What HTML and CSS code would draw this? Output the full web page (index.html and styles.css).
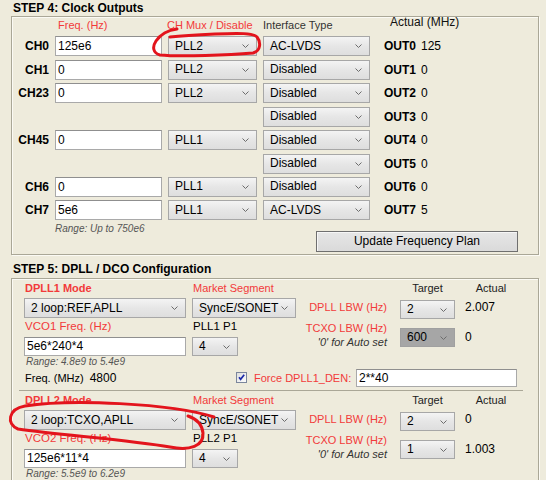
FILE: index.html
```html
<!DOCTYPE html>
<html>
<head>
<meta charset="utf-8">
<link rel="stylesheet" href="styles.css">
</head>
<body>
<div class="page">
  <div class="step-title">STEP 4: Clock Outputs</div>
  <div class="group g4">
    <div class="clk-grid">
      <div></div>
      <div class="hdr red pad-freq">Freq. (Hz)</div>
      <div class="hdr red pad-mux">CH Mux / Disable</div>
      <div class="hdr dark">Interface Type</div>
      <div class="hdr-actual">Actual (MHz)</div>

      <div class="ch">CH0</div>
      <div class="inp">125e6</div>
      <div class="sel"><span>PLL2</span><svg class="chev" width="7" height="4" viewBox="0 0 7 4"><path d="M0.5 0.5L3.5 3.5L6.5 0.5"/></svg></div>
      <div class="sel"><span>AC-LVDS</span><svg class="chev" width="7" height="4" viewBox="0 0 7 4"><path d="M0.5 0.5L3.5 3.5L6.5 0.5"/></svg></div>
      <div class="out"><b>OUT0</b>125</div>

      <div class="ch">CH1</div>
      <div class="inp">0</div>
      <div class="sel"><span>PLL2</span><svg class="chev" width="7" height="4" viewBox="0 0 7 4"><path d="M0.5 0.5L3.5 3.5L6.5 0.5"/></svg></div>
      <div class="sel"><span>Disabled</span><svg class="chev" width="7" height="4" viewBox="0 0 7 4"><path d="M0.5 0.5L3.5 3.5L6.5 0.5"/></svg></div>
      <div class="out"><b>OUT1</b>0</div>

      <div class="ch">CH23</div>
      <div class="inp">0</div>
      <div class="sel"><span>PLL2</span><svg class="chev" width="7" height="4" viewBox="0 0 7 4"><path d="M0.5 0.5L3.5 3.5L6.5 0.5"/></svg></div>
      <div class="sel"><span>Disabled</span><svg class="chev" width="7" height="4" viewBox="0 0 7 4"><path d="M0.5 0.5L3.5 3.5L6.5 0.5"/></svg></div>
      <div class="out"><b>OUT2</b>0</div>

      <div></div>
      <div></div>
      <div></div>
      <div class="sel"><span>Disabled</span><svg class="chev" width="7" height="4" viewBox="0 0 7 4"><path d="M0.5 0.5L3.5 3.5L6.5 0.5"/></svg></div>
      <div class="out"><b>OUT3</b>0</div>

      <div class="ch">CH45</div>
      <div class="inp">0</div>
      <div class="sel"><span>PLL1</span><svg class="chev" width="7" height="4" viewBox="0 0 7 4"><path d="M0.5 0.5L3.5 3.5L6.5 0.5"/></svg></div>
      <div class="sel"><span>Disabled</span><svg class="chev" width="7" height="4" viewBox="0 0 7 4"><path d="M0.5 0.5L3.5 3.5L6.5 0.5"/></svg></div>
      <div class="out"><b>OUT4</b>0</div>

      <div></div>
      <div></div>
      <div></div>
      <div class="sel"><span>Disabled</span><svg class="chev" width="7" height="4" viewBox="0 0 7 4"><path d="M0.5 0.5L3.5 3.5L6.5 0.5"/></svg></div>
      <div class="out"><b>OUT5</b>0</div>

      <div class="ch">CH6</div>
      <div class="inp">0</div>
      <div class="sel"><span>PLL1</span><svg class="chev" width="7" height="4" viewBox="0 0 7 4"><path d="M0.5 0.5L3.5 3.5L6.5 0.5"/></svg></div>
      <div class="sel"><span>Disabled</span><svg class="chev" width="7" height="4" viewBox="0 0 7 4"><path d="M0.5 0.5L3.5 3.5L6.5 0.5"/></svg></div>
      <div class="out"><b>OUT6</b>0</div>

      <div class="ch">CH7</div>
      <div class="inp">5e6</div>
      <div class="sel"><span>PLL1</span><svg class="chev" width="7" height="4" viewBox="0 0 7 4"><path d="M0.5 0.5L3.5 3.5L6.5 0.5"/></svg></div>
      <div class="sel"><span>AC-LVDS</span><svg class="chev" width="7" height="4" viewBox="0 0 7 4"><path d="M0.5 0.5L3.5 3.5L6.5 0.5"/></svg></div>
      <div class="out"><b>OUT7</b>5</div>
    </div>
    <div class="clk-foot">
      <div class="range range4">Range: Up to 750e6</div>
      <div class="btn">Update Frequency Plan</div>
    </div>
  </div>

  <div class="step-title step5">STEP 5: DPLL / DCO Configuration</div>
  <div class="group g5">
    <div class="dpll d1">
      <div class="dpll-main">
        <div class="dl-grid">
          <div class="lbl red bold">DPLL1 Mode</div>
          <div class="lbl red">Market Segment</div>
          <div class="sel"><span>2 loop:REF,APLL</span><svg class="chev" width="7" height="4" viewBox="0 0 7 4"><path d="M0.5 0.5L3.5 3.5L6.5 0.5"/></svg></div>
          <div class="sel"><span>SyncE/SONET</span><svg class="chev" width="7" height="4" viewBox="0 0 7 4"><path d="M0.5 0.5L3.5 3.5L6.5 0.5"/></svg></div>
          <div class="lbl2 red">VCO1 Freq. (Hz)</div>
          <div class="lbl2">PLL1 P1</div>
          <div class="inp inp-vco">5e6*240*4</div>
          <div class="sel sel-p1"><span>4</span><svg class="chev" width="7" height="4" viewBox="0 0 7 4"><path d="M0.5 0.5L3.5 3.5L6.5 0.5"/></svg></div>
          <div class="range range5">Range: 4.8e9 to 5.4e9</div>
          <div></div>
        </div>
        <div class="dr-grid">
          <div></div>
          <div class="rh target">Target</div>
          <div class="rh">Actual</div>
          <div class="rlbl red">DPLL LBW (Hz)</div>
          <div class="sel sel-lbw"><span>2</span><svg class="chev" width="7" height="4" viewBox="0 0 7 4"><path d="M0.5 0.5L3.5 3.5L6.5 0.5"/></svg></div>
          <div class="ract">2.007</div>
          <div class="rlbl2"><div class="red">TCXO LBW (Hz)</div><div class="note">'0' for Auto set</div></div>
          <div class="sel sel-lbw2 disabled"><span>600</span><svg class="chev" width="7" height="4" viewBox="0 0 7 4"><path d="M0.5 0.5L3.5 3.5L6.5 0.5"/></svg></div>
          <div class="ract2">0</div>
        </div>
      </div>
      <div class="dpll-foot">
        <div class="freq-info">Freq. (MHz)<span class="fval">4800</span></div>
        <svg class="cbox" width="11" height="11" viewBox="0 0 11 11">
          <defs><linearGradient id="cbg" x1="0" y1="0" x2="1" y2="1"><stop offset="0" stop-color="#dcdcdc"/><stop offset="1" stop-color="#ffffff"/></linearGradient></defs>
          <rect x="0.5" y="0.5" width="10" height="10" fill="url(#cbg)" stroke="#7b869c"/>
          <path d="M3 5.3L4.6 7.3L8.2 2.8" fill="none" stroke="#1c2aa8" stroke-width="1.7"/>
        </svg>
        <div class="force red">Force DPLL1_DEN:</div>
        <div class="inp inp-den">2**40</div>
      </div>
    </div>

    <div class="dpll d2">
      <div class="dpll-main">
        <div class="dl-grid">
          <div class="lbl red bold">DPLL2 Mode</div>
          <div class="lbl red">Market Segment</div>
          <div class="sel"><span>2 loop:TCXO,APLL</span><svg class="chev" width="7" height="4" viewBox="0 0 7 4"><path d="M0.5 0.5L3.5 3.5L6.5 0.5"/></svg></div>
          <div class="sel"><span>SyncE/SONET</span><svg class="chev" width="7" height="4" viewBox="0 0 7 4"><path d="M0.5 0.5L3.5 3.5L6.5 0.5"/></svg></div>
          <div class="lbl2 red">VCO2 Freq. (Hz)</div>
          <div class="lbl2">PLL2 P1</div>
          <div class="inp inp-vco">125e6*11*4</div>
          <div class="sel sel-p1"><span>4</span><svg class="chev" width="7" height="4" viewBox="0 0 7 4"><path d="M0.5 0.5L3.5 3.5L6.5 0.5"/></svg></div>
          <div class="range range5">Range: 5.5e9 to 6.2e9</div>
          <div></div>
        </div>
        <div class="dr-grid">
          <div></div>
          <div class="rh target">Target</div>
          <div class="rh">Actual</div>
          <div class="rlbl red">DPLL LBW (Hz)</div>
          <div class="sel sel-lbw"><span>2</span><svg class="chev" width="7" height="4" viewBox="0 0 7 4"><path d="M0.5 0.5L3.5 3.5L6.5 0.5"/></svg></div>
          <div class="ract">0</div>
          <div class="rlbl2"><div class="red">TCXO LBW (Hz)</div><div class="note">'0' for Auto set</div></div>
          <div class="sel sel-lbw2"><span>1</span><svg class="chev" width="7" height="4" viewBox="0 0 7 4"><path d="M0.5 0.5L3.5 3.5L6.5 0.5"/></svg></div>
          <div class="ract2">1.003</div>
        </div>
      </div>
    </div>
  </div>

  <svg class="annot" width="546" height="480" viewBox="0 0 546 480">
    <path d="M177,29 C168,30 160,35 156,41 C152,47 153,53 160,55 C180,57 230,55 253,53 C261,51 261,42 257,37 C253,33 240,33 215,34 C195,35 180,36 170,37"/>
    <path d="M214,417 C170,403 70,399 25,406 C8,409 6,424 18,429 C60,435 130,440 170,447 C190,451 204,446 203,433 C202,424 197,419 188,416"/>
  </svg>
</div>
</body>
</html>
```

FILE: styles.css
```css
* { box-sizing: border-box; }
body {
  margin: 0;
  font-family: "Liberation Sans", Arial, sans-serif;
  color: #000;
  background: #eeebdc;
}
.page {
  position: relative;
  width: 546px;
  height: 480px;
  overflow: hidden;
  background: #eeebdc;
}
.step-title {
  font-weight: bold;
  font-size: 12px;
  line-height: 16px;
  height: 16px;
  padding-left: 13px;
}
.step5 { margin-top: 6px; margin-bottom: 1px; }
.group {
  margin-left: 11px;
  width: 528px;
  border: 1px solid #aaa797;
  box-shadow: inset 1px 1px 0 #fbfaf4, 1px 1px 0 #fbfaf4;
}
.g4 { height: 239px; }
.g5 { height: 230px; }
.red { color: #f23a3a; }
.bold { font-weight: bold; }

/* STEP 4 grid */
.clk-grid {
  display: grid;
  grid-template-columns: 37px 107px 89px 107px 1fr;
  grid-template-rows: 16px repeat(8, 20px);
  column-gap: 6px;
  row-gap: 3.43px;
}
.hdr { font-size: 11px; line-height: 16px; white-space: nowrap; }
.hdr.dark { color: #333; }
.pad-freq { padding-left: 3px; }
.pad-mux { margin-left: -1px; }
.hdr-actual { font-size: 12px; line-height: 16px; padding-left: 14px; margin-top: -3px; color: #111; }
.ch { font-weight: bold; font-size: 12px; line-height: 20px; text-align: right; }
.inp {
  height: 20px;
  background: #fff;
  border: 1px solid #a9a9a9;
  border-top-color: #8f8f8f;
  font-size: 12px;
  line-height: 16px;
  padding: 1px 2px;
  white-space: nowrap;
}
.sel {
  height: 20px;
  display: flex;
  align-items: center;
  border: 1px solid #a7a7a7;
  background: linear-gradient(#f4f4f4, #e6e6e6 50%, #dedede);
  font-size: 12px;
  padding: 0 7px 1px 6px;
  white-space: nowrap;
}
.sel span { flex: 1; }
.sel.disabled { background: #a6a6a6; border-color: #a0a0a0; }
.chev { flex: none; margin-top: 1px; }
.chev path { fill: none; stroke: #6c6c6c; stroke-width: 1; }
.out { font-size: 12px; line-height: 20px; padding-left: 8px; white-space: nowrap; }
.out b { display: inline-block; width: 37px; font-size: 12px; }

.clk-foot { display: flex; align-items: flex-start; }
.range { font-size: 10px; font-style: italic; color: #555; line-height: 12px; white-space: nowrap; }
.range4 { margin-left: 43px; margin-top: 3px; }
.btn {
  margin-left: auto;
  margin-right: 20px;
  margin-top: 11px;
  width: 202px;
  height: 21px;
  border: 1px solid #6f6f6f;
  background: linear-gradient(#e6e6e6, #dadada);
  box-shadow: inset 1px 1px 0 #f6f6f6;
  font-size: 12px;
  line-height: 19px;
  text-align: center;
}

/* STEP 5 */
.dpll { margin: 0 15px 0 7px; padding-left: 5px; }
.d1 { border-bottom: 1px solid #aaa797; }
.dpll-main { display: flex; align-items: flex-start; }
.dl-grid {
  display: grid;
  grid-template-columns: 162px 104px;
  grid-template-rows: 19px 20px 19px 19px 11px;
  column-gap: 6px;
}
.lbl { font-size: 11px; line-height: 19px; padding-left: 1px; white-space: nowrap; }
.lbl2 { font-size: 11.5px; line-height: 16px; padding-left: 1px; white-space: nowrap; }
.dl-grid .sel { height: 20px; }
.inp-vco { height: 19px; line-height: 15px; }
.sel-p1 { width: 46px; height: 19px !important; }
.range5 { margin-left: 2px; line-height: 11px; }

.dr-grid {
  display: grid;
  grid-template-columns: 104px 65px 52px;
  grid-template-rows: 18px 22px auto;
}
.rh { font-size: 11px; line-height: 18px; text-align: center; color: #222; }
.target { width: 55px; }
.rlbl { font-size: 11px; line-height: 15px; margin-top: 3px; text-align: right; padding-right: 13px; white-space: nowrap; }
.sel-lbw { width: 55px; height: 19px; margin-top: 3px; }
.ract { font-size: 12px; line-height: 15px; margin-top: 3px; }
.rlbl2 { font-size: 11px; line-height: 14px; margin-top: 2px; text-align: right; padding-right: 13px; white-space: nowrap; }
.note { font-style: italic; color: #333; }
.sel-lbw2 { width: 55px; height: 19px; margin-top: 9px; }
.ract2 { font-size: 12px; line-height: 19px; margin-top: 9px; }

.dpll-foot {
  display: flex;
  align-items: center;
  height: 23px;
  padding: 1px 0 3px;
}
.freq-info { width: 212px; font-size: 11px; padding-left: 1px; white-space: nowrap; }
.fval { font-size: 12px; margin-left: 6px; }
.cbox { flex: none; }
.force { width: 102px; margin-left: 7px; font-size: 11px; white-space: nowrap; }
.inp-den { width: 161px; height: 18px; line-height: 14px; }

.annot { position: absolute; left: 0; top: 0; pointer-events: none; }
.annot path { fill: none; stroke: #e3141c; stroke-width: 3; stroke-linecap: round; stroke-linejoin: round; }
```
